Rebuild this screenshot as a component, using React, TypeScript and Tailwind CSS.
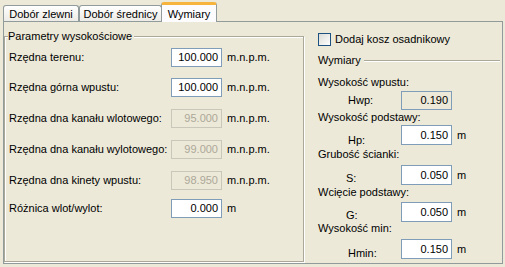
import React from "react";

const FONT = "font-['Liberation_Sans',Arial,sans-serif]";

function Input({ value, kind = "normal", h = "h-[19px]" }: { value: string; kind?: "normal" | "disabled" | "readonly"; h?: string }) {
  const cls =
    kind === "normal"
      ? "bg-white border-[#7F9DB9] text-black"
      : kind === "readonly"
      ? "bg-[#ECE9D8] border-[#7F9DB9] text-black"
      : "bg-[#ECE9D8] border-[#C9C7BA] text-[#ACA899]";
  return (
    <div className={`w-[51px] ${h} border ${cls} flex items-center justify-end pr-[3px] shrink-0`}>
      {value}
    </div>
  );
}

function LeftRow({ label, value, unit, kind, mt }: { label: string; value: string; unit: string; kind?: "normal" | "disabled"; mt: string }) {
  return (
    <div className={`flex items-center h-[19px] pl-[4px] ${mt}`}>
      <div className="w-[162px] shrink-0">{label}</div>
      <Input value={value} kind={kind} />
      <div className="ml-[5px]">{unit}</div>
    </div>
  );
}

function RightRow({ label, value, kind, mt, pt, labelPl, unit = true }: { label: string; value: string; kind?: "normal" | "readonly"; mt: string; pt: string; labelPl: string; unit?: boolean }) {
  return (
    <div className={`flex items-start h-[20px] ${mt}`}>
      <div className={`w-[83px] shrink-0 ${labelPl} ${pt}`}>{label}</div>
      <Input value={value} kind={kind} h={kind === "readonly" ? "h-[19px]" : "h-[20px]"} />
      {unit && <div className="ml-[5px] self-center">m</div>}
    </div>
  );
}

export default function App() {
  return (
    <div className={`w-[505px] h-[267px] bg-[#ECE9D8] ${FONT} text-[11px] leading-[13px] text-black overflow-hidden`}>
      {/* tab strip */}
      <div className="flex items-end h-[21px] pl-[3px] relative z-10">
        <div className="w-[76px] h-[16px] border border-b-0 border-[#919B9C] rounded-t-[3px] bg-gradient-to-b from-white to-[#ECEBE6] flex items-center justify-center pt-[1px]">
          Dobór zlewni
        </div>
        <div className="w-[83px] h-[16px] border border-b-0 border-[#919B9C] rounded-t-[3px] bg-gradient-to-b from-white to-[#ECEBE6] flex items-center justify-center pt-[1px]">
          Dobór średnicy
        </div>
        <div className="-ml-[1px] -mb-[1px] w-[56px] h-[20px] border border-b-0 border-[#919B9C] border-t-[3px] border-t-[#F7B43C] rounded-t-[3px] bg-[#FCFCFE] flex items-start justify-center pt-[3px]">
          Wymiary
        </div>
      </div>
      {/* panel */}
      <div className="ml-[3px] w-[500px] h-[243px] border border-[#919B9C] bg-[#ECE9D8] flex">
        <fieldset className="mt-[8px] w-[300px] h-[232px] border border-[#ACA899] shadow-[inset_1px_1px_0_#fff,1px_1px_0_#fff] shrink-0">
          <legend className="ml-[3px] pr-[2px] bg-[#ECE9D8] leading-[13px]">Parametry wysokościowe</legend>
          <LeftRow label="Rzędna terenu:" value="100.000" unit="m.n.p.m." mt="mt-[5px]" />
          <LeftRow label="Rzędna górna wpustu:" value="100.000" unit="m.n.p.m." mt="mt-[11px]" />
          <LeftRow label="Rzędna dna kanału wlotowego:" value="95.000" unit="m.n.p.m." kind="disabled" mt="mt-[12px]" />
          <LeftRow label="Rzędna dna kanału wylotowego:" value="99.000" unit="m.n.p.m." kind="disabled" mt="mt-[12px]" />
          <LeftRow label="Rzędna dna kinety wpustu:" value="98.950" unit="m.n.p.m." kind="disabled" mt="mt-[12px]" />
          <LeftRow label="Różnica wlot/wylot:" value="0.000" unit="m" mt="mt-[9px]" />
        </fieldset>
        <div className="flex-1 flex flex-col pl-[14px] pr-[2px]">
          <div className="mt-[11px] flex items-center h-[13px]">
            <div className="w-[13px] h-[13px] border border-[#1C5180] bg-gradient-to-br from-[#DCDCD7] to-white shrink-0" />
            <span className="ml-[4px]">Dodaj kosz osadnikowy</span>
          </div>
          <div className="mt-[8px] flex items-center h-[13px]">
            <span>Wymiary</span>
            <div className="flex-1 ml-[3px] h-[2px] border-t border-[#ACA899] bg-white" />
          </div>
          <div className="mt-[9px] h-[13px]">Wysokość wpustu:</div>
          <RightRow label="Hwp:" value="0.190" kind="readonly" mt="mt-[2px]" pt="pt-[3px]" labelPl="pl-[30px]" unit={false} />
          <div className="mt-[0px] h-[13px]">Wysokość podstawy:</div>
          <RightRow label="Hp:" value="0.150" mt="mt-[1px]" pt="pt-[9px]" labelPl="pl-[30px]" />
          <div className="mt-[3px] h-[13px]">Grubość ścianki:</div>
          <RightRow label="S:" value="0.050" mt="mt-[4px]" pt="pt-[7px]" labelPl="pl-[28px]" />
          <div className="mt-[1px] h-[13px]">Wcięcie podstawy:</div>
          <RightRow label="G:" value="0.050" mt="mt-[3px]" pt="pt-[7px]" labelPl="pl-[28px]" />
          <div className="mt-[0px] h-[13px]">Wysokość min:</div>
          <RightRow label="Hmin:" value="0.150" mt="mt-[4px]" pt="pt-[8px]" labelPl="pl-[30px]" />
        </div>
      </div>
    </div>
  );
}
